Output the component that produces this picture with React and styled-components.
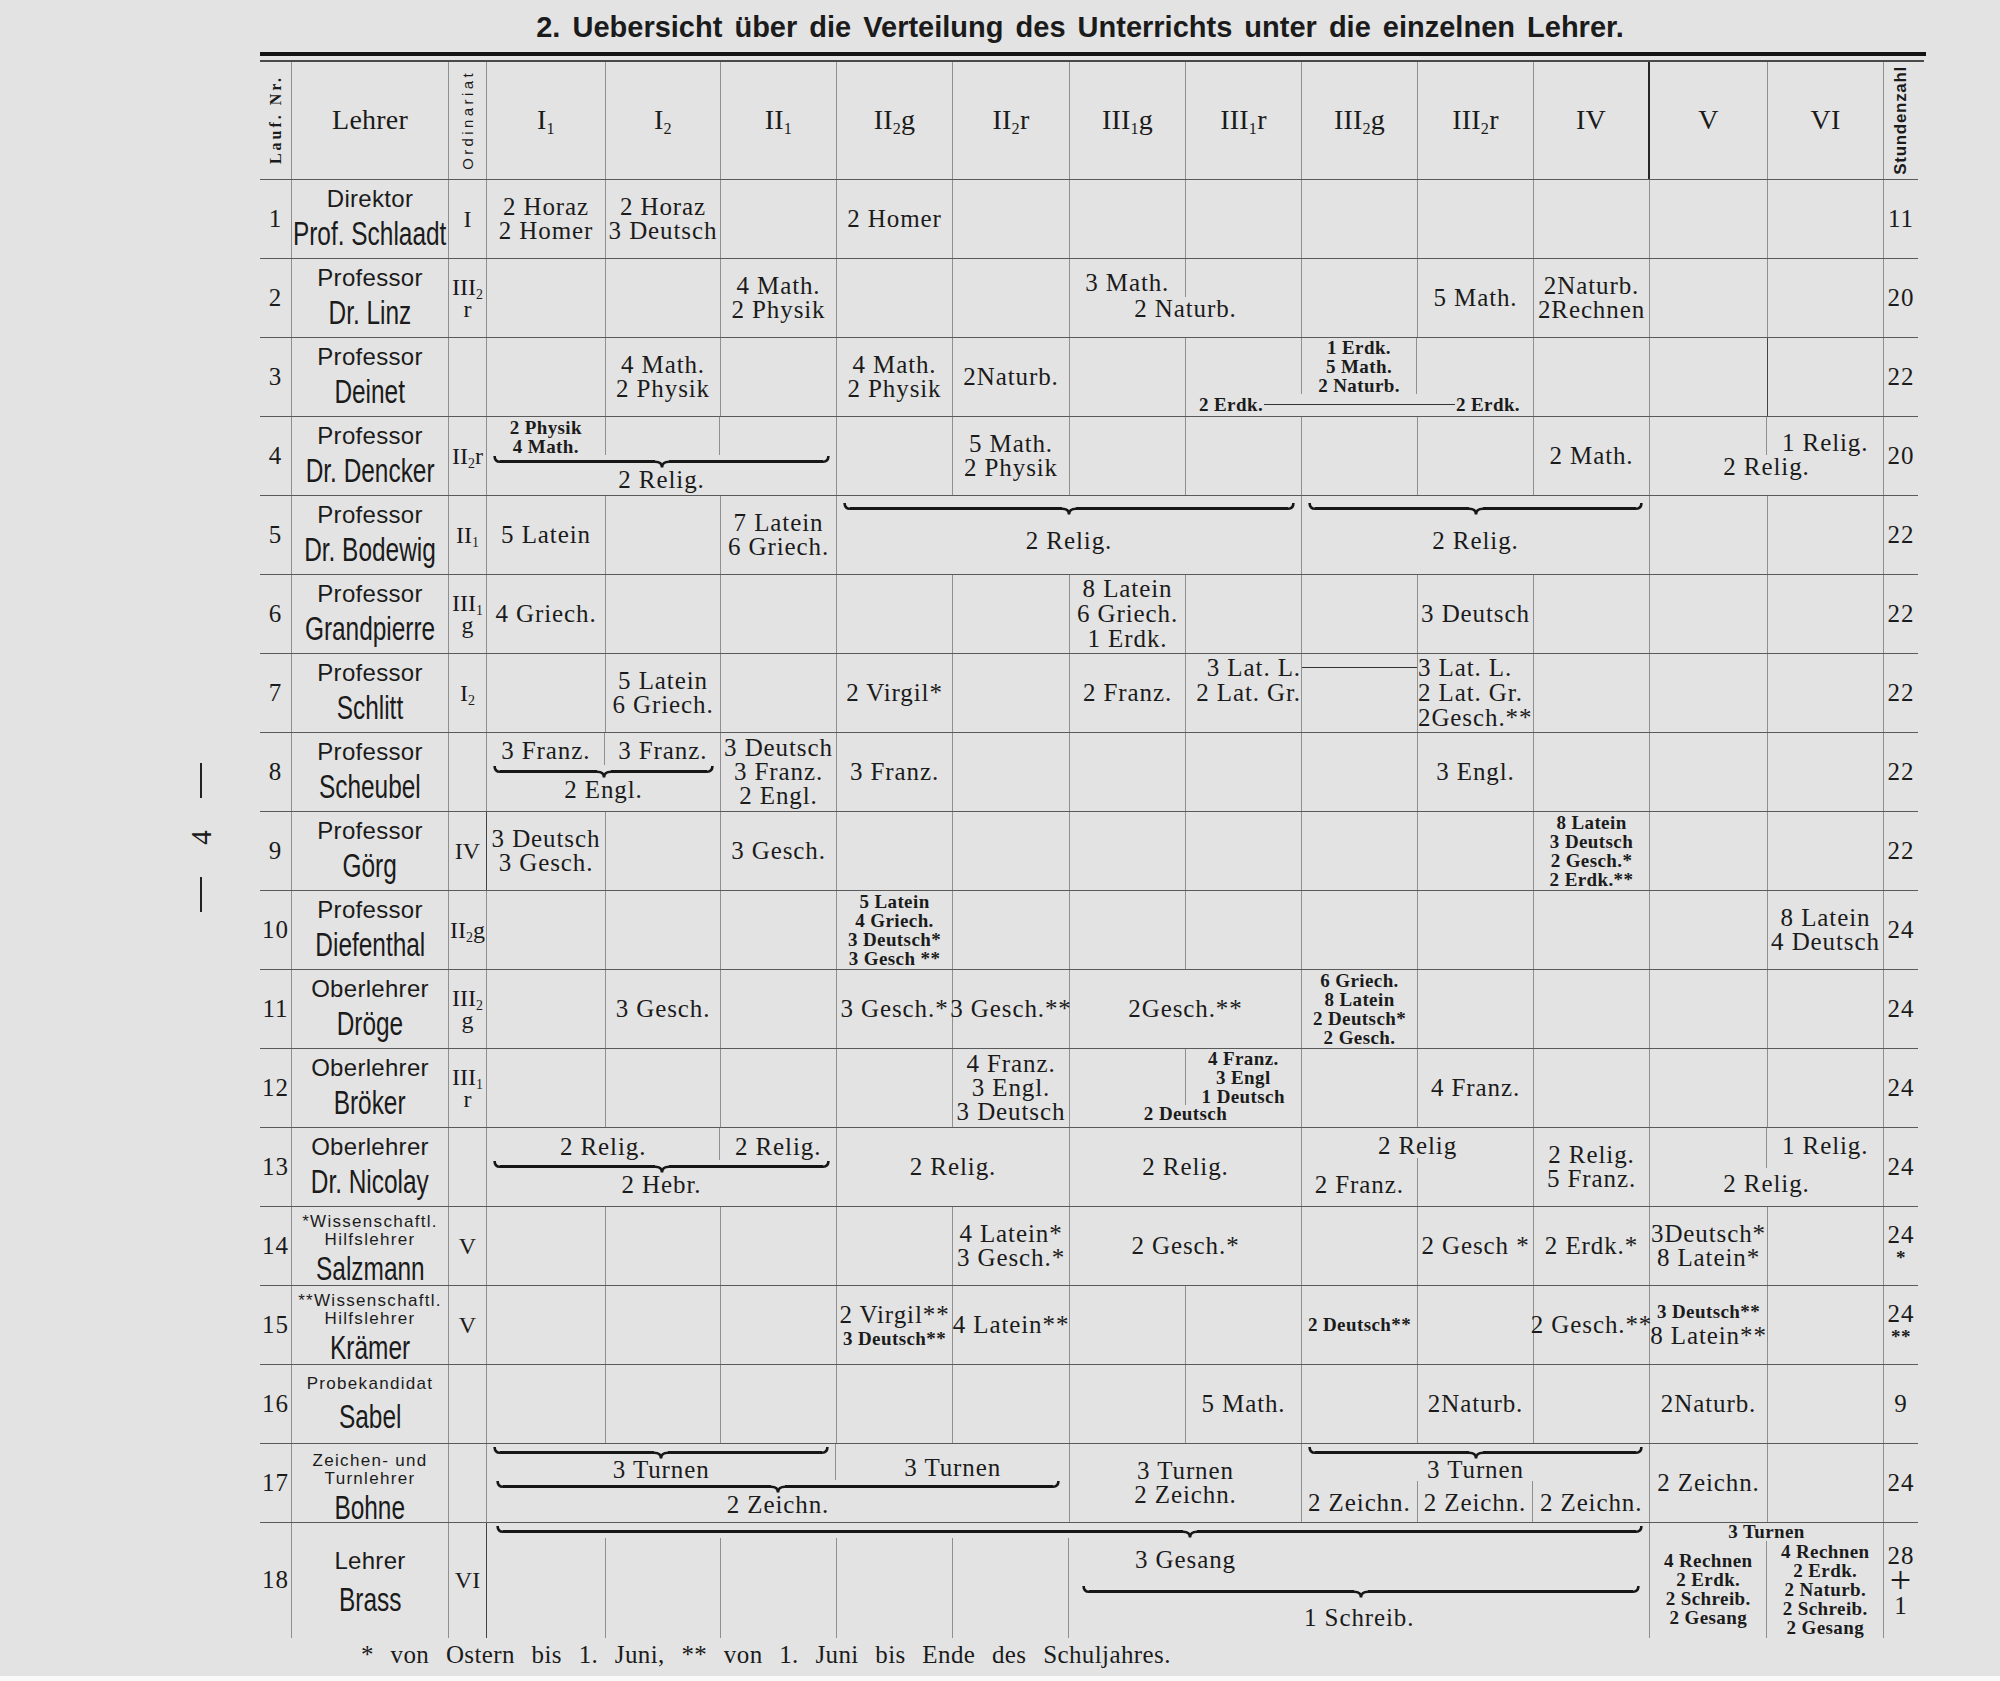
import React from 'react'
import styled, { createGlobalStyle } from 'styled-components'

const INK = '#1b1b1b'
const RULE = '#5a5a5a'
const HAIR = '#8f8f8f'
const SMALL = 'font-size: 19px; font-weight: 700; letter-spacing: 0.4px;'

// class column widths, I1 .. VI
const W = [119, 115, 116, 116, 117, 116, 116, 116, 116, 116, 118, 116]
const COLS = ['32px', '157px', '38px', ...W.map(w => w + 'px'), '34px'].join(' ')
const frs = (start, n) => W.slice(start, start + n).map(w => w + 'fr').join(' ')

const ALIGN = { top: 'flex-start', left: 'flex-start', center: 'center', bottom: 'flex-end', right: 'flex-end' }

const CLASSES = [
    ['I', '1', ''], ['I', '2', ''], ['II', '1', ''], ['II', '2', 'g'], ['II', '2', 'r'],
    ['III', '1', 'g'], ['III', '1', 'r'], ['III', '2', 'g'], ['III', '2', 'r'],
    ['IV', '', ''], ['V', '', ''], ['VI', '', ''],
]

const GlobalStyle = createGlobalStyle`
  *, *::before, *::after { box-sizing: border-box; }
  html, body { margin: 0; padding: 0; background: #fafafa; }
`

const Page = styled.div`
  width: 2000px;
  height: 1676px;
  display: flex;
  background: #e3e3e3;
  color: ${INK};
`

const Gutter = styled.div`
  width: 260px;
  flex: none;
  display: flex;
  justify-content: flex-end;
  padding: 763px 44px 0 0;
`

const Folio = styled.div`
  width: 30px;
  display: flex;
  flex-direction: column;
  align-items: center;
  align-self: flex-start;
`

const Dash = styled.div`
  width: 2.5px;
  height: 35px;
  background: #222;
`

const FolioNum = styled.div`
  height: 79px;
  display: flex;
  align-items: center;
  font-family: 'Liberation Serif', serif;
  font-size: 29px;
  transform: rotate(-90deg);
`

const Main = styled.div`
  width: 1658px;
  display: flex;
  flex-direction: column;
`

const Title = styled.h1`
  margin: 0;
  height: 52px;
  padding: 9px 18px 0 0;
  text-align: center;
  font-family: 'Liberation Sans Narrow', 'Liberation Sans', sans-serif;
  font-stretch: condensed;
  font-weight: 700;
  font-size: 29px;
  line-height: 36px;
  word-spacing: 4px;
  letter-spacing: 0;
  white-space: nowrap;
`

const ThickRule = styled.div`
  width: 1666px;
  height: 4px;
  background: #141414;
`

const ThinRule = styled.div`
  width: 1664px;
  height: 1.5px;
  margin-top: 4px;
  background: #4a4a4a;
`

const Row = styled.div`
  display: grid;
  grid-template-columns: ${COLS};
  grid-template-rows: minmax(0, 1fr);
  height: ${p => p.$h || 79}px;
  border-bottom: ${p => (p.$last ? 'none' : `1.5px solid ${RULE}`)};
`

const Box = styled.div`
  grid-column: span ${p => p.$span || 1};
  min-width: 0;
  min-height: 0;
  border-right: ${p => (p.$end ? 'none' : p.$heavy ? '2.5px solid #262626' : p.$dark ? '1.5px solid #444' : `1px solid ${HAIR}`)};
`

const Cell = styled(Box)`
  display: flex;
  flex-direction: column;
  align-items: ${p => ALIGN[p.$x || 'center']};
  justify-content: ${p => ALIGN[p.$v || 'center']};
  padding-top: ${p => p.$pt || 0}px;
  font-family: 'Liberation Serif', 'DejaVu Serif', serif;
  font-size: 25px;
  line-height: ${p => p.$lh || 24}px;
  letter-spacing: 0.9px;
  white-space: nowrap;
  ${p => p.$small && SMALL}
  ${p => p.$small && `line-height: ${p.$lh || 19}px;`}
`

const Ord = styled(Cell)`
  font-size: 24px;
  line-height: 22px;
  letter-spacing: 0;
`

const Ln = styled.div`
  ${p => p.$small && `${SMALL} line-height: 21px;`}
  ${p => p.$big && 'font-size: 25px; font-weight: 400; line-height: 27px; letter-spacing: 0.9px;'}
  ${p => p.$plus && 'font-size: 38px; line-height: 25px; font-weight: 300;'}
  ${p => p.$lh && `line-height: ${p.$lh}px;`}
`

const Idx = styled.span`
  font-size: 0.58em;
  line-height: 0;
  vertical-align: -0.28em;
`

const Head = styled(Box)`
  display: flex;
  align-items: center;
  justify-content: center;
`

const HeadText = styled.div`
  font-family: 'Liberation Serif', serif;
  font-size: 28px;
  letter-spacing: 0.2px;
  white-space: nowrap;
`

const Vert = styled.div`
  writing-mode: vertical-rl;
  transform: rotate(180deg);
  font-family: ${p => (p.$serif ? "'Liberation Serif', serif" : "'Liberation Sans', sans-serif")};
  font-weight: ${p => (p.$bold ? 700 : 400)};
  font-size: ${p => p.$size}px;
  letter-spacing: ${p => p.$ls}px;
  white-space: nowrap;
`

const NameCell = styled(Box)`
  display: flex;
  flex-direction: column;
  align-items: center;
  padding-top: ${p => p.$pt ?? 4}px;
`

const Rank = styled.div`
  font-family: 'Liberation Sans', sans-serif;
  font-size: ${p => (p.$small ? 17 : 24)}px;
  line-height: ${p => (p.$small ? 18 : 30)}px;
  letter-spacing: ${p => (p.$small ? 1.3 : 0.3)}px;
  white-space: nowrap;
`

const Name = styled.div`
  margin-top: ${p => p.$mt || 0}px;
  font-family: 'Liberation Sans', sans-serif;
  font-size: 33px;
  line-height: 40px;
  white-space: nowrap;
  transform: scaleX(0.74);
`

const Stack = styled(Box)`
  display: flex;
  flex-direction: column;
  padding-top: ${p => p.$pt || 0}px;
  font-family: 'Liberation Serif', 'DejaVu Serif', serif;
  font-size: 25px;
  line-height: 24px;
  letter-spacing: 0.9px;
  white-space: nowrap;
`

const Part = styled.div`
  display: grid;
  grid-template-columns: ${p => p.$cols};
  grid-template-rows: minmax(0, 1fr);
  ${p => (p.$h ? `height: ${p.$h}px; flex: none;` : 'flex: 1; min-height: 0;')}
`

const Piece = styled.div`
  grid-column: span ${p => p.$span || 1};
  display: flex;
  flex-direction: column;
  align-items: center;
  justify-content: ${p => ALIGN[p.$v || 'center']};
  padding-top: ${p => p.$pt || 0}px;
  padding-bottom: ${p => p.$pb || 0}px;
  border-right: ${p => (p.$line ? `1px solid ${HAIR}` : 'none')};
  min-width: 0;
  ${p => p.$small && `${SMALL} line-height: 19px;`}
`

const Label = styled.div`
  flex: none;
  align-self: ${p => (p.$w ? 'flex-start' : 'stretch')};
  width: ${p => (p.$w ? p.$w + 'px' : 'auto')};
  margin-top: ${p => p.$mt || 0}px;
  text-align: center;
  ${p => p.$small && `${SMALL} line-height: 18px;`}
  ${p => p.$lh && `line-height: ${p.$lh}px;`}
`

const Joined = styled.div`
  display: flex;
  align-items: center;
  height: 21px;
  padding: 0 13px;
  line-height: 21px;
  ${SMALL}
`

const Tie = styled.div`
  flex: 1;
  margin: 0 1px;
  border-top: 1.5px solid #333;
`

const Link = styled.div`
  align-self: stretch;
  margin-top: 13px;
  border-top: 1.5px solid #333;
`

const BraceRow = styled.div`
  flex: none;
  align-self: stretch;
  display: flex;
  height: 13px;
  margin-top: ${p => p.$mt || 0}px;
  padding: 0 ${p => p.$right ?? p.$inset}px 0 ${p => p.$inset}px;
  color: #161616;

  svg {
    flex: none;
    display: block;
  }
`

const BraceBar = styled.div`
  flex: ${p => p.$f} 1 0;
  height: 0;
  margin-top: 5px;
  border-top: 3.5px solid currentColor;
`

const Note = styled.div`
  margin-top: 2px;
  padding-left: 101px;
  font-family: 'Liberation Serif', serif;
  font-size: 25px;
  line-height: 30px;
  letter-spacing: 0.4px;
  word-spacing: 10px;
`

function Brace({ tip = 0.5, mt = 0, inset = 6, right }) {
    return (
        <BraceRow $mt={mt} $inset={inset} $right={right}>
            <svg width="7" height="13" viewBox="0 0 7 13">
                <path d="M1.6 1 Q1.6 6.75 7 6.75" fill="none" stroke="currentColor" strokeWidth="2.6" />
            </svg>
            <BraceBar $f={tip} />
            <svg width="14" height="13" viewBox="0 0 14 13">
                <path d="M0 6.75 Q7 6.75 7 12.5 Q7 6.75 14 6.75" fill="none" stroke="currentColor" strokeWidth="2.6" />
            </svg>
            <BraceBar $f={1 - tip} />
            <svg width="7" height="13" viewBox="0 0 7 13">
                <path d="M0 6.75 Q5.4 6.75 5.4 1" fill="none" stroke="currentColor" strokeWidth="2.6" />
            </svg>
        </BraceRow>
    )
}

function Teacher({ rank, name, small, pt, mt }) {
    return (
        <NameCell $pt={pt}>
            {rank.map((r, i) => <Rank key={i} $small={small}>{r}</Rank>)}
            <Name $mt={mt}>{name}</Name>
        </NameCell>
    )
}

function blanks(n, key) {
    return Array.from({ length: n }, (_, i) => <Cell key={`${key}-${i}`} />)
}

export default function App() {
    return (
        <>
            <GlobalStyle />
            <Page>
                <Gutter>
                    <Folio>
                        <Dash />
                        <FolioNum>4</FolioNum>
                        <Dash />
                    </Folio>
                </Gutter>
                <Main>
                    <Title>2. Uebersicht über die Verteilung des Unterrichts unter die einzelnen Lehrer.</Title>
                    <ThickRule />
                    <ThinRule />

                    <Row $h={118}>
                        <Head><Vert $serif $bold $size={16} $ls={3}>Lauf. Nr.</Vert></Head>
                        <Head><HeadText>Lehrer</HeadText></Head>
                        <Head><Vert $size={15} $ls={3.4}>Ordinariat</Vert></Head>
                        {CLASSES.map(([base, idx, tail], i) => (
                            <Head key={i} $heavy={i === 9}>
                                <HeadText>{base}{idx && <Idx>{idx}</Idx>}{tail}</HeadText>
                            </Head>
                        ))}
                        <Head $end><Vert $bold $size={17} $ls={0.7}>Stundenzahl</Vert></Head>
                    </Row>

                    {/* 1 */}
                    <Row>
                        <Cell>1</Cell>
                        <Teacher rank={['Direktor']} name="Prof. Schlaadt" />
                        <Ord>I</Ord>
                        <Cell><Ln>2 Horaz</Ln><Ln>2 Homer</Ln></Cell>
                        <Cell><Ln>2 Horaz</Ln><Ln>3 Deutsch</Ln></Cell>
                        <Cell />
                        <Cell>2 Homer</Cell>
                        {blanks(8, 'r1')}
                        <Cell $end>11</Cell>
                    </Row>

                    {/* 2 */}
                    <Row>
                        <Cell>2</Cell>
                        <Teacher rank={['Professor']} name="Dr. Linz" />
                        <Ord><Ln>III<Idx>2</Idx></Ln><Ln>r</Ln></Ord>
                        <Cell />
                        <Cell />
                        <Cell><Ln>4 Math.</Ln><Ln>2 Physik</Ln></Cell>
                        <Cell />
                        <Cell />
                        <Stack $span={2}>
                            <Part $cols={frs(5, 2)} $h={38}>
                                <Piece $line $v="bottom" $pb={2}>3 Math.</Piece>
                                <Piece />
                            </Part>
                            <Label>2 Naturb.</Label>
                        </Stack>
                        <Cell />
                        <Cell>5 Math.</Cell>
                        <Cell><Ln>2Naturb.</Ln><Ln>2Rechnen</Ln></Cell>
                        <Cell />
                        <Cell />
                        <Cell $end>20</Cell>
                    </Row>

                    {/* 3 */}
                    <Row>
                        <Cell>3</Cell>
                        <Teacher rank={['Professor']} name="Deinet" />
                        <Ord />
                        <Cell />
                        <Cell><Ln>4 Math.</Ln><Ln>2 Physik</Ln></Cell>
                        <Cell />
                        <Cell><Ln>4 Math.</Ln><Ln>2 Physik</Ln></Cell>
                        <Cell>2Naturb.</Cell>
                        <Cell />
                        <Stack $span={3}>
                            <Part $cols={frs(6, 3)} $h={56}>
                                <Piece $line />
                                <Piece $line $small $v="top"><Ln>1 Erdk.</Ln><Ln>5 Math.</Ln><Ln>2 Naturb.</Ln></Piece>
                                <Piece />
                            </Part>
                            <Joined><span>2 Erdk.</span><Tie /><span>2 Erdk.</span></Joined>
                        </Stack>
                        <Cell />
                        <Cell $dark />
                        <Cell />
                        <Cell $end>22</Cell>
                    </Row>

                    {/* 4 */}
                    <Row>
                        <Cell>4</Cell>
                        <Teacher rank={['Professor']} name="Dr. Dencker" />
                        <Ord><Ln>II<Idx>2</Idx>r</Ln></Ord>
                        <Stack $span={3}>
                            <Part $cols={frs(0, 3)} $h={38}>
                                <Piece $line $small $v="top" $pt={1}><Ln>2 Physik</Ln><Ln>4 Math.</Ln></Piece>
                                <Piece $line />
                                <Piece />
                            </Part>
                            <Brace />
                            <Label>2 Relig.</Label>
                        </Stack>
                        <Cell />
                        <Cell><Ln>5 Math.</Ln><Ln>2 Physik</Ln></Cell>
                        {blanks(4, 'r4')}
                        <Cell>2 Math.</Cell>
                        <Stack $span={2}>
                            <Part $cols={frs(10, 2)} $h={38}>
                                <Piece $line />
                                <Piece $v="bottom">1 Relig.</Piece>
                            </Part>
                            <Label>2 Relig.</Label>
                        </Stack>
                        <Cell $end>20</Cell>
                    </Row>

                    {/* 5 */}
                    <Row>
                        <Cell>5</Cell>
                        <Teacher rank={['Professor']} name="Dr. Bodewig" />
                        <Ord><Ln>II<Idx>1</Idx></Ln></Ord>
                        <Cell>5 Latein</Cell>
                        <Cell />
                        <Cell><Ln>7 Latein</Ln><Ln>6 Griech.</Ln></Cell>
                        <Stack $span={4} $pt={6}>
                            <Brace />
                            <Label $mt={14}>2 Relig.</Label>
                        </Stack>
                        <Stack $span={3} $pt={6}>
                            <Brace />
                            <Label $mt={14}>2 Relig.</Label>
                        </Stack>
                        <Cell />
                        <Cell />
                        <Cell $end>22</Cell>
                    </Row>

                    {/* 6 */}
                    <Row>
                        <Cell>6</Cell>
                        <Teacher rank={['Professor']} name="Grandpierre" />
                        <Ord><Ln>III<Idx>1</Idx></Ln><Ln>g</Ln></Ord>
                        <Cell>4 Griech.</Cell>
                        {blanks(4, 'r6a')}
                        <Cell $lh={25}><Ln>8 Latein</Ln><Ln>6 Griech.</Ln><Ln>1 Erdk.</Ln></Cell>
                        <Cell />
                        <Cell />
                        <Cell>3 Deutsch</Cell>
                        {blanks(3, 'r6b')}
                        <Cell $end>22</Cell>
                    </Row>

                    {/* 7 */}
                    <Row>
                        <Cell>7</Cell>
                        <Teacher rank={['Professor']} name="Schlitt" />
                        <Ord><Ln>I<Idx>2</Idx></Ln></Ord>
                        <Cell />
                        <Cell><Ln>5 Latein</Ln><Ln>6 Griech.</Ln></Cell>
                        <Cell />
                        <Cell>2 Virgil*</Cell>
                        <Cell />
                        <Cell>2 Franz.</Cell>
                        <Cell $v="top" $x="right" $pt={1} $lh={25}><Ln>3 Lat. L.</Ln><Ln>2 Lat. Gr.</Ln></Cell>
                        <Cell $v="top"><Link /></Cell>
                        <Cell $v="top" $x="left" $pt={1} $lh={25}><Ln>3 Lat. L.</Ln><Ln>2 Lat. Gr.</Ln><Ln>2Gesch.**</Ln></Cell>
                        {blanks(3, 'r7')}
                        <Cell $end>22</Cell>
                    </Row>

                    {/* 8 */}
                    <Row>
                        <Cell>8</Cell>
                        <Teacher rank={['Professor']} name="Scheubel" />
                        <Ord />
                        <Stack $span={2}>
                            <Part $cols={frs(0, 2)} $h={32}>
                                <Piece $line $v="top" $pt={6}>3 Franz.</Piece>
                                <Piece $v="top" $pt={6}>3 Franz.</Piece>
                            </Part>
                            <Brace />
                            <Label>2 Engl.</Label>
                        </Stack>
                        <Cell><Ln>3 Deutsch</Ln><Ln>3 Franz.</Ln><Ln>2 Engl.</Ln></Cell>
                        <Cell>3 Franz.</Cell>
                        {blanks(4, 'r8a')}
                        <Cell>3 Engl.</Cell>
                        {blanks(3, 'r8b')}
                        <Cell $end>22</Cell>
                    </Row>

                    {/* 9 */}
                    <Row>
                        <Cell>9</Cell>
                        <Teacher rank={['Professor']} name="Görg" />
                        <Ord $dark>IV</Ord>
                        <Cell><Ln>3 Deutsch</Ln><Ln>3 Gesch.</Ln></Cell>
                        <Cell />
                        <Cell>3 Gesch.</Cell>
                        {blanks(6, 'r9a')}
                        <Cell $small><Ln>8 Latein</Ln><Ln>3 Deutsch</Ln><Ln>2 Gesch.*</Ln><Ln>2 Erdk.**</Ln></Cell>
                        <Cell />
                        <Cell />
                        <Cell $end>22</Cell>
                    </Row>

                    {/* 10 */}
                    <Row>
                        <Cell>10</Cell>
                        <Teacher rank={['Professor']} name="Diefenthal" />
                        <Ord><Ln>II<Idx>2</Idx>g</Ln></Ord>
                        {blanks(3, 'r10a')}
                        <Cell $small><Ln>5 Latein</Ln><Ln>4 Griech.</Ln><Ln>3 Deutsch*</Ln><Ln>3 Gesch **</Ln></Cell>
                        {blanks(7, 'r10b')}
                        <Cell><Ln>8 Latein</Ln><Ln>4 Deutsch</Ln></Cell>
                        <Cell $end>24</Cell>
                    </Row>

                    {/* 11 */}
                    <Row>
                        <Cell>11</Cell>
                        <Teacher rank={['Oberlehrer']} name="Dröge" />
                        <Ord><Ln>III<Idx>2</Idx></Ln><Ln>g</Ln></Ord>
                        <Cell />
                        <Cell>3 Gesch.</Cell>
                        <Cell />
                        <Cell>3 Gesch.*</Cell>
                        <Cell>3 Gesch.**</Cell>
                        <Cell $span={2}>2Gesch.**</Cell>
                        <Cell $small><Ln>6 Griech.</Ln><Ln>8 Latein</Ln><Ln>2 Deutsch*</Ln><Ln>2 Gesch.</Ln></Cell>
                        {blanks(4, 'r11')}
                        <Cell $end>24</Cell>
                    </Row>

                    {/* 12 */}
                    <Row>
                        <Cell>12</Cell>
                        <Teacher rank={['Oberlehrer']} name="Bröker" />
                        <Ord><Ln>III<Idx>1</Idx></Ln><Ln>r</Ln></Ord>
                        {blanks(4, 'r12a')}
                        <Cell><Ln>4 Franz.</Ln><Ln>3 Engl.</Ln><Ln>3 Deutsch</Ln></Cell>
                        <Stack $span={2}>
                            <Part $cols={frs(5, 2)} $h={56}>
                                <Piece $line />
                                <Piece $small $v="top"><Ln>4 Franz.</Ln><Ln>3 Engl</Ln><Ln>1 Deutsch</Ln></Piece>
                            </Part>
                            <Label $small>2 Deutsch</Label>
                        </Stack>
                        <Cell />
                        <Cell>4 Franz.</Cell>
                        {blanks(3, 'r12b')}
                        <Cell $end>24</Cell>
                    </Row>

                    {/* 13 */}
                    <Row>
                        <Cell>13</Cell>
                        <Teacher rank={['Oberlehrer']} name="Dr. Nicolay" />
                        <Ord />
                        <Stack $span={3}>
                            <Part $cols={frs(0, 3)} $h={32}>
                                <Piece $span={2} $line $v="top" $pt={7}>2 Relig.</Piece>
                                <Piece $v="top" $pt={7}>2 Relig.</Piece>
                            </Part>
                            <Brace />
                            <Label>2 Hebr.</Label>
                        </Stack>
                        <Cell $span={2}>2 Relig.</Cell>
                        <Cell $span={2}>2 Relig.</Cell>
                        <Stack $span={2} $pt={6}>
                            <Label>2 Relig</Label>
                            <Part $cols={frs(7, 2)}>
                                <Piece $line $pt={6}>2 Franz.</Piece>
                                <Piece />
                            </Part>
                        </Stack>
                        <Cell><Ln>2 Relig.</Ln><Ln>5 Franz.</Ln></Cell>
                        <Stack $span={2}>
                            <Part $cols={frs(10, 2)} $h={40}>
                                <Piece $line />
                                <Piece $v="top" $pt={6}>1 Relig.</Piece>
                            </Part>
                            <Label $mt={4}>2 Relig.</Label>
                        </Stack>
                        <Cell $end>24</Cell>
                    </Row>

                    {/* 14 */}
                    <Row>
                        <Cell>14</Cell>
                        <Teacher small pt={6} rank={['*Wissenschaftl.', 'Hilfslehrer']} name="Salzmann" />
                        <Ord>V</Ord>
                        {blanks(4, 'r14')}
                        <Cell><Ln>4 Latein*</Ln><Ln>3 Gesch.*</Ln></Cell>
                        <Cell $span={2}>2 Gesch.*</Cell>
                        <Cell />
                        <Cell>2 Gesch *</Cell>
                        <Cell>2 Erdk.*</Cell>
                        <Cell><Ln>3Deutsch*</Ln><Ln>8 Latein*</Ln></Cell>
                        <Cell />
                        <Cell $end><Ln>24</Ln><Ln $small>*</Ln></Cell>
                    </Row>

                    {/* 15 */}
                    <Row>
                        <Cell>15</Cell>
                        <Teacher small pt={6} rank={['**Wissenschaftl.', 'Hilfslehrer']} name="Krämer" />
                        <Ord>V</Ord>
                        {blanks(3, 'r15a')}
                        <Cell><Ln $big>2 Virgil**</Ln><Ln $small>3 Deutsch**</Ln></Cell>
                        <Cell>4 Latein**</Cell>
                        <Cell />
                        <Cell />
                        <Cell $small>2 Deutsch**</Cell>
                        <Cell />
                        <Cell>2 Gesch.**</Cell>
                        <Cell><Ln $small>3 Deutsch**</Ln><Ln $big>8 Latein**</Ln></Cell>
                        <Cell />
                        <Cell $end><Ln>24</Ln><Ln $small>**</Ln></Cell>
                    </Row>

                    {/* 16 */}
                    <Row>
                        <Cell>16</Cell>
                        <Teacher small pt={10} mt={4} rank={['Probekandidat']} name="Sabel" />
                        <Ord />
                        {blanks(6, 'r16')}
                        <Cell>5 Math.</Cell>
                        <Cell />
                        <Cell>2Naturb.</Cell>
                        <Cell />
                        <Cell>2Naturb.</Cell>
                        <Cell />
                        <Cell $end>9</Cell>
                    </Row>

                    {/* 17 */}
                    <Row>
                        <Cell>17</Cell>
                        <Teacher small pt={8} rank={['Zeichen- und', 'Turnlehrer']} name="Bohne" />
                        <Ord />
                        <Stack $span={5}>
                            <Part $cols={frs(0, 5)} $h={36}>
                                <Piece $span={3} $line $v="top">
                                    <Brace mt={2} />
                                    <Ln $lh={22}>3 Turnen</Ln>
                                </Piece>
                                <Piece $span={2} $v="top" $pt={12}>3 Turnen</Piece>
                            </Part>
                            <Brace inset={9} />
                            <Label>2 Zeichn.</Label>
                        </Stack>
                        <Cell $span={2}><Ln>3 Turnen</Ln><Ln>2 Zeichn.</Ln></Cell>
                        <Stack $span={3}>
                            <Brace mt={2} />
                            <Label $lh={22}>3 Turnen</Label>
                            <Part $cols={frs(7, 3)}>
                                <Piece $line $pt={4}>2 Zeichn.</Piece>
                                <Piece $line $pt={4}>2 Zeichn.</Piece>
                                <Piece $pt={4}>2 Zeichn.</Piece>
                            </Part>
                        </Stack>
                        <Cell>2 Zeichn.</Cell>
                        <Cell />
                        <Cell $end>24</Cell>
                    </Row>

                    {/* 18 */}
                    <Row $h={115} $last>
                        <Cell>18</Cell>
                        <Teacher pt={23} mt={4} rank={['Lehrer']} name="Brass" />
                        <Ord $dark>VI</Ord>
                        <Stack $span={10}>
                            <Brace mt={2} tip={0.608} inset={9} right={6} />
                            <Part $cols={frs(0, 10)}>
                                <Piece $line />
                                <Piece $line />
                                <Piece $line />
                                <Piece $line />
                                <Piece $line />
                                <Piece $span={5} $v="top">
                                    <Label $w={232} $mt={10}>3 Gesang</Label>
                                    <Brace mt={13} inset={13} right={9} />
                                    <Label $mt={8}>1 Schreib.</Label>
                                </Piece>
                            </Part>
                        </Stack>
                        <Stack $span={2}>
                            <Label $small>3 Turnen</Label>
                            <Part $cols={frs(10, 2)}>
                                <Piece $line $small>
                                    <Ln>4 Rechnen</Ln><Ln>2 Erdk.</Ln><Ln>2 Schreib.</Ln><Ln>2 Gesang</Ln>
                                </Piece>
                                <Piece $small>
                                    <Ln>4 Rechnen</Ln><Ln>2 Erdk.</Ln><Ln>2 Naturb.</Ln><Ln>2 Schreib.</Ln><Ln>2 Gesang</Ln>
                                </Piece>
                            </Part>
                        </Stack>
                        <Cell $end $lh={25}><Ln>28</Ln><Ln $plus>+</Ln><Ln>1</Ln></Cell>
                    </Row>

                    <Note>* von Ostern bis 1. Juni, ** von 1. Juni bis Ende des Schuljahres.</Note>
                </Main>
            </Page>
        </>
    )
}
